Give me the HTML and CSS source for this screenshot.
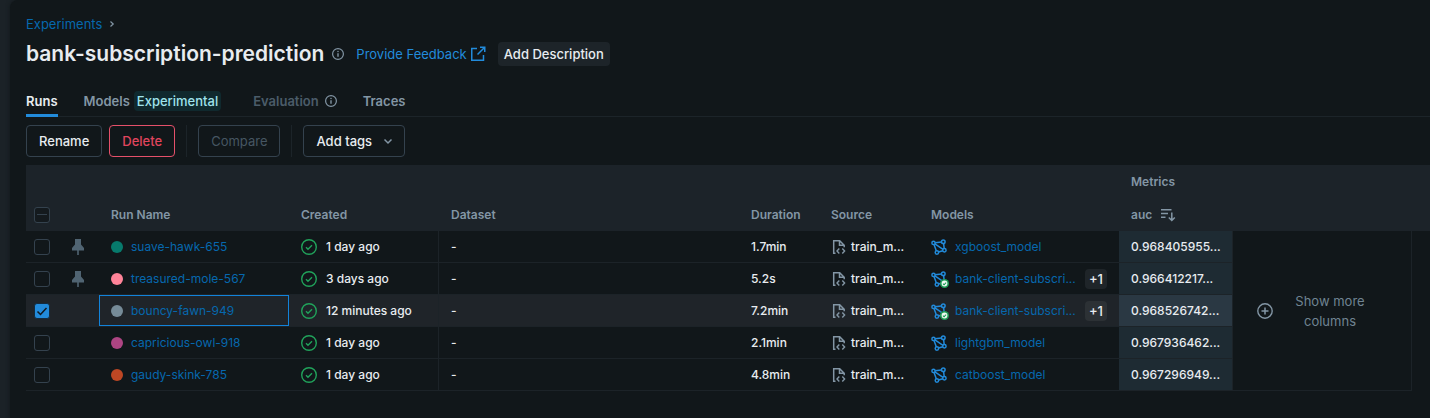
FILE: index.html
```html
<!DOCTYPE html>
<html lang="en">
<head>
<meta charset="utf-8">
<title>bank-subscription-prediction</title>
<link rel="stylesheet" href="styles.css">
</head>
<body>
<svg class="sprite" aria-hidden="true">
  <symbol id="info" viewBox="1 1 14 14"><circle cx="8" cy="8" r="6.300" fill="none" stroke="currentColor" stroke-width="1.400"/><path d="M8 7.200v4" stroke="currentColor" stroke-width="1.600"/><circle cx="8" cy="5.200" r=".9" fill="currentColor"/></symbol>
  <symbol id="external" viewBox="0 0 16 16"><path d="M7 2.500H1.750v11.750H13.500V9M10 1.250h4.750V6M14.500 1.500L7.500 8.500" fill="none" stroke="currentColor" stroke-width="1.500"/></symbol>
  <symbol id="chevron-right" viewBox="0 0 8 8"><path d="M2.500 1.500L5.200 4L2.500 6.500" fill="none" stroke="currentColor" stroke-width="1.200"/></symbol>
  <symbol id="chevron-down" viewBox="0 0 16 16"><path d="M4.500 6.500l3.500 3.500l3.500-3.500" fill="none" stroke="currentColor" stroke-width="1.500"/></symbol>
  <symbol id="pin" viewBox="0 0 16 16"><path d="M5 0h6v5.500l3 3.500v2.500H8.800V16H7.200v-4.500H2V9l3-3.500z" fill="currentColor"/></symbol>
  <symbol id="success" viewBox="0 0 16 16"><circle cx="8" cy="8" r="7.300" fill="none" stroke="currentColor" stroke-width="1.400"/><path d="M5 8.200l2 2l4-4" fill="none" stroke="currentColor" stroke-width="1.400"/></symbol>
  <symbol id="source" viewBox="0 0 16 16"><path d="M4.500 14.300H2.700V1.700h6l4.500 4.500v2M8.500 1.700V6.200H13" fill="none" stroke="currentColor" stroke-width="1.500"/><path d="M8.300 9.500L6 12l2.300 2.500M11.300 9.500L13.600 12l-2.300 2.500" fill="none" stroke="currentColor" stroke-width="1.400"/></symbol>
  <symbol id="model" viewBox="0 0 16 16"><g fill="none" stroke="currentColor" stroke-width="1.500"><circle cx="2.500" cy="3.900" r="1.600"/><circle cx="12.300" cy="2.700" r="1.800"/><circle cx="13.400" cy="11.300" r="1.700"/><circle cx="5.900" cy="13.500" r="1.700"/><path d="M4.100 3.700l6.400-.8M12.600 4.500l.6 5.100M11.800 11.700l-4.300 1.300M3 5.500l2.400 6.400M3.900 4.800l8.100 5.500"/></g></symbol>
  <symbol id="registered" viewBox="0 0 10 10"><circle cx="5" cy="5" r="5" fill="#1f9d57"/><circle cx="5" cy="5" r="3.200" fill="#eef8f2"/><path d="M3.300 5.200l1.200 1.200L6.800 4" fill="none" stroke="#1f9d57" stroke-width="1.200"/></symbol>
  <symbol id="sort" viewBox="0 0 16 16"><path d="M1 2.700h10.500M1 6.500h7M1 10.300h4.500M11.800 5.500v8M8.800 10.500l3 3l3-3" fill="none" stroke="currentColor" stroke-width="1.500"/></symbol>
  <symbol id="plus" viewBox="0 0 16 16"><circle cx="8" cy="8" r="7.200" fill="none" stroke="currentColor" stroke-width="1.400"/><path d="M8 4.500v7M4.500 8h7" stroke="currentColor" stroke-width="1.500"/></symbol>
</svg>
<main class="page">
  <nav class="breadcrumb" aria-label="Breadcrumb"><a href="#">Experiments</a><svg class="icon-tiny"><use href="#chevron-right"/></svg></nav>
  <header class="title-row">
    <h1>bank-subscription-prediction</h1>
    <svg class="icon-small muted"><use href="#info"/></svg>
    <a class="feedback" href="#">Provide Feedback<svg class="icon"><use href="#external"/></svg></a>
    <button class="description" type="button">Add Description</button>
  </header>
  <nav class="tabs" aria-label="Experiment views">
    <a class="tab active" href="#">Runs</a>
    <a class="tab with-tag" href="#">Models<span class="tag">Experimental</span></a>
    <a class="tab disabled" href="#">Evaluation<svg class="icon-small muted"><use href="#info"/></svg></a>
    <a class="tab" href="#">Traces</a>
  </nav>
  <div class="toolbar">
    <button class="btn" type="button">Rename</button>
    <button class="btn danger" type="button">Delete</button>
    <span class="divider"></span>
    <button class="btn" type="button" disabled>Compare</button>
    <span class="divider"></span>
    <button class="btn menu" type="button">Add tags<svg class="icon muted"><use href="#chevron-down"/></svg></button>
  </div>
  <table class="runs">
    <colgroup><col class="c-check"><col class="c-pin"><col class="c-name"><col class="c-created"><col class="c-dataset"><col class="c-duration"><col class="c-source"><col class="c-models"><col class="c-auc"><col class="c-more"><col></colgroup>
    <thead>
      <tr><th colspan="8"></th><th>Metrics</th><th colspan="2"></th></tr>
      <tr><th class="check"><input type="checkbox" class="partial" aria-label="Select all runs"></th><th></th><th>Run Name</th><th>Created</th><th>Dataset</th><th>Duration</th><th>Source</th><th>Models</th><th><span class="cell sort">auc<svg class="icon"><use href="#sort"/></svg></span></th><th colspan="2"></th></tr>
    </thead>
    <tbody>
      <tr>
        <td class="check"><input type="checkbox" aria-label="Select suave-hawk-655"></td>
        <td class="pin"><svg class="icon"><use href="#pin"/></svg></td>
        <td><span class="cell"><i class="dot teal"></i><a href="#">suave-hawk-655</a></span></td>
        <td class="created"><span class="cell"><svg class="icon"><use href="#success"/></svg>1 day ago</span></td>
        <td>-</td><td>1.7min</td>
        <td><span class="cell source"><svg class="icon"><use href="#source"/></svg>train_m...</span></td>
        <td><span class="cell"><span class="model"><svg class="icon"><use href="#model"/></svg></span><a href="#">xgboost_model</a></span></td>
        <td class="auc">0.968405955...</td>
        <td class="more" rowspan="5"><button class="show-more" type="button"><svg class="icon"><use href="#plus"/></svg><span>Show more columns</span></button></td>
        <td class="rest" rowspan="5"></td>
      </tr>
      <tr>
        <td class="check"><input type="checkbox" aria-label="Select treasured-mole-567"></td>
        <td class="pin"><svg class="icon"><use href="#pin"/></svg></td>
        <td><span class="cell"><i class="dot pink"></i><a href="#">treasured-mole-567</a></span></td>
        <td class="created"><span class="cell"><svg class="icon"><use href="#success"/></svg>3 days ago</span></td>
        <td>-</td><td>5.2s</td>
        <td><span class="cell source"><svg class="icon"><use href="#source"/></svg>train_m...</span></td>
        <td><span class="cell"><span class="model"><svg class="icon"><use href="#model"/></svg><svg class="mark"><use href="#registered"/></svg></span><a class="long" href="#">bank-client-subscri...</a><span class="count">+1</span></span></td>
        <td class="auc">0.966412217...</td>
      </tr>
      <tr class="selected">
        <td class="check"><input type="checkbox" aria-label="Select bouncy-fawn-949" checked></td>
        <td></td>
        <td class="focused"><span class="cell"><i class="dot gray"></i><a href="#">bouncy-fawn-949</a></span></td>
        <td class="created"><span class="cell"><svg class="icon"><use href="#success"/></svg>12 minutes ago</span></td>
        <td>-</td><td>7.2min</td>
        <td><span class="cell source"><svg class="icon"><use href="#source"/></svg>train_m...</span></td>
        <td><span class="cell"><span class="model"><svg class="icon"><use href="#model"/></svg><svg class="mark"><use href="#registered"/></svg></span><a class="long" href="#">bank-client-subscri...</a><span class="count">+1</span></span></td>
        <td class="auc">0.968526742...</td>
      </tr>
      <tr>
        <td class="check"><input type="checkbox" aria-label="Select capricious-owl-918"></td>
        <td></td>
        <td><span class="cell"><i class="dot purple"></i><a href="#">capricious-owl-918</a></span></td>
        <td class="created"><span class="cell"><svg class="icon"><use href="#success"/></svg>1 day ago</span></td>
        <td>-</td><td>2.1min</td>
        <td><span class="cell source"><svg class="icon"><use href="#source"/></svg>train_m...</span></td>
        <td><span class="cell"><span class="model"><svg class="icon"><use href="#model"/></svg></span><a href="#">lightgbm_model</a></span></td>
        <td class="auc">0.967936462...</td>
      </tr>
      <tr>
        <td class="check"><input type="checkbox" aria-label="Select gaudy-skink-785"></td>
        <td></td>
        <td><span class="cell"><i class="dot orange"></i><a href="#">gaudy-skink-785</a></span></td>
        <td class="created"><span class="cell"><svg class="icon"><use href="#success"/></svg>1 day ago</span></td>
        <td>-</td><td>4.8min</td>
        <td><span class="cell source"><svg class="icon"><use href="#source"/></svg>train_m...</span></td>
        <td><span class="cell"><span class="model"><svg class="icon"><use href="#model"/></svg></span><a href="#">catboost_model</a></span></td>
        <td class="auc">0.967296949...</td>
      </tr>
    </tbody>
  </table>
</main>
</body>
</html>
```
FILE: styles.css
```css
* { box-sizing: border-box; }
body {
  margin: 0;
  padding-left: 10px;
  min-height: 100vh;
  display: flex;
  background: #1b2227;
  color: #e8ecf0;
  font: 13px/20px Inter, Roboto, sans-serif;
}
a { color: #0668ae; text-decoration: none; }
button { font: inherit; color: inherit; cursor: pointer; }
svg { display: block; flex: none; }
.sprite { position: absolute; width: 0; height: 0; }
.icon { width: 16px; height: 16px; }
.icon-small { width: 12px; height: 12px; }
.icon-tiny { width: 8px; height: 8px; }
.muted { color: #8396a5; }

.page {
  flex: 1;
  min-width: 0;
  padding: 14px 0 0 16px;
  background: #11171a;
  border-top-left-radius: 8px;
  box-shadow: 0 0 4px #11171a;
}
.breadcrumb { display: flex; align-items: center; gap: 6px; color: #8396a5; }
.title-row { display: flex; align-items: center; height: 32px; margin-top: 4px; }
.title-row h1 { margin: 0 8px 0 0; font-size: 21px; line-height: 28px; font-weight: 600; }
.feedback { display: flex; align-items: center; gap: 3px; margin: 0 12px; color: #228bdb; }
.description { height: 24px; padding: 0 6px; border: 0; border-radius: 4px; background: #1d2429; font-weight: 500; }

.tabs { display: flex; gap: 26px; margin-top: 16px; height: 31px; border-bottom: 1px solid #1c2429; }
.tab { display: flex; align-items: center; gap: 6px; height: 31px; padding-top: 2px; border-bottom: 3px solid transparent; color: #8396a5; font-weight: 600; }
.tab.active { color: #e8ecf0; border-bottom-color: #228bdb; }
.tab.disabled { color: #4b5c69; }
.tab.with-tag { gap: 4px; margin-right: 6px; }
.tag { padding: 0 3px; border-radius: 4px; background: #10292e; color: #9fe3ec; font-weight: 500; }

.toolbar { display: flex; align-items: center; gap: 7px; padding: 8px 0; }
.btn { height: 32px; padding: 0 12px; border: 1px solid #34424e; border-radius: 4px; background: transparent; font-weight: 500; }
.btn.danger { color: #e0455e; border-color: #e5506a; }
.btn:disabled { color: #465662; font-weight: 400; }
.btn.menu { display: flex; align-items: center; gap: 8px; padding-right: 8px; }
.divider { width: 1px; height: 32px; margin: 0 4px; background: #1c2429; }

.runs { width: 100%; table-layout: fixed; border-collapse: separate; border-spacing: 0; font-size: 12px; }
.c-check { width: 38px; }
.c-pin { width: 35px; }
.c-name { width: 190px; }
.c-created { width: 150px; }
.c-dataset { width: 300px; }
.c-duration { width: 80px; }
.c-source { width: 100px; }
.c-models { width: 200px; }
.c-auc { width: 114px; }
.c-more { width: 179px; }
th, td { padding: 0 12px; text-align: left; white-space: nowrap; }
th { height: 33px; background: #1c2329; color: #8396a5; font-weight: 600; }
td { height: 32px; border-bottom: 1px solid #1c2328; font-weight: 500; }
td a { font-weight: 400; }
.cell { display: flex; align-items: center; }
.check { padding: 0 8px; }
.pin { padding: 0 6px; color: #506472; }
input {
  appearance: none;
  display: block;
  width: 16px;
  height: 16px;
  margin: 0;
  border: 1px solid #34424e;
  border-radius: 3px;
  background: transparent center no-repeat;
}
input.partial { background-image: linear-gradient(#34424e, #34424e); background-color: #141a1e; background-size: 10px 1px; }
input:checked {
  border-color: #142c40;
  background-color: #228bdb;
  background-image: url("data:image/svg+xml,%3Csvg xmlns='http://www.w3.org/2000/svg' width='14' height='14'%3E%3Cpath d='M2.500 7.500l3 3l6-6.500' fill='none' stroke='%23101820' stroke-width='1.500'/%3E%3C/svg%3E");
}
.dot { width: 12px; height: 12px; margin-right: 8px; border-radius: 50%; flex: none; }
.teal { background: #077a6c; }
.pink { background: #ff8499; }
.gray { background: #768b98; }
.purple { background: #ae4583; }
.orange { background: #be4724; }
.created { border-right: 1px solid #1c2328; }
.created .icon { margin-right: 9px; color: #21a35b; }
.source .icon { margin-right: 4px; color: #8396a5; }
.model { position: relative; margin-right: 8px; color: #228bdb; }
.mark { position: absolute; right: -2px; bottom: -1px; width: 9px; height: 9px; }
.long { flex: 1; }
.count { padding: 0 4px; border-radius: 4px; background: #1f2529; font-size: 13px; }
.selected td { background: #1f2429; }
.selected .count { background: #2c3135; }
.auc { background: #1e2b33; border-right: 1px solid #1c2328; }
.selected .auc { background: #2a3843; }
.sort { gap: 8px; }
.focused { box-shadow: inset 0 0 0 1px #1283da; }
.more { border-right: 1px solid #1c2328; padding: 0 24px; }
.rest { border: 0; padding: 0; }
.show-more { display: flex; align-items: center; width: 100%; padding: 0; border: 0; background: none; color: #708492; font-size: 13px; font-weight: 400; }
.show-more .icon { color: #8396a5; }
.show-more span { flex: 1; padding: 0 12px; text-align: center; white-space: normal; }
```
